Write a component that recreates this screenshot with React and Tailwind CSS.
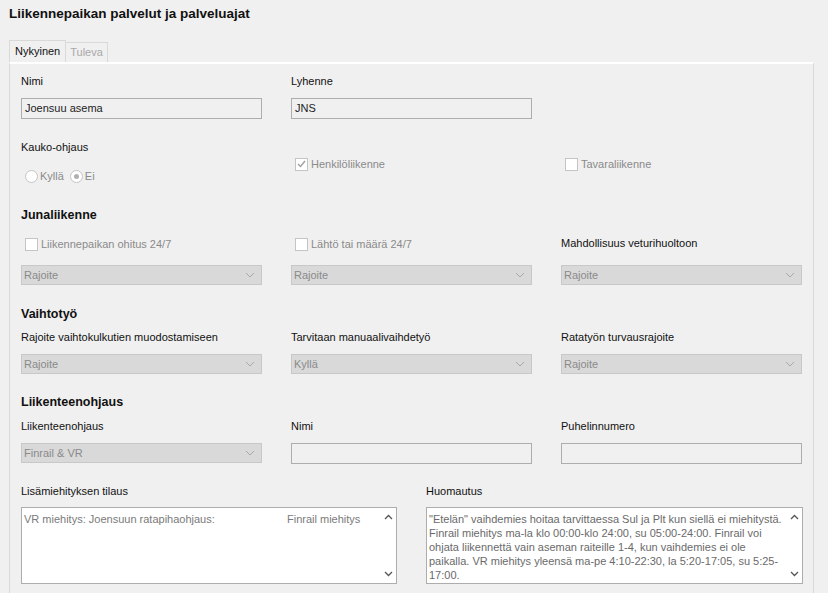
const F = { fontFamily: '"Liberation Sans", Arial, sans-serif' };

function Field({ value }) {
  return (
    <div className="h-[21px] border border-[#adadad] bg-[#f0f0f0] px-[3px] flex items-center text-[11px] text-[#222]">
      {value}
    </div>
  );
}

function Select({ value }) {
  return (
    <div className="h-[20px] border border-[#c8c8c8] bg-[#d9d9d9] pl-[2px] pr-[6px] flex items-center justify-between text-[11px] text-[#8a8a8a]">
      <span>{value}</span>
      <svg width="10" height="6" viewBox="0 0 10 6"><path d="M1 1l4 4 4-4" fill="none" stroke="#a8a8a8" strokeWidth="1" /></svg>
    </div>
  );
}

function Check({ label, checked }) {
  return (
    <div className="flex items-center gap-[3px] text-[11px] text-[#8a8a8a]">
      <div className="w-[13px] h-[13px] border border-[#c4c4c4] bg-white flex items-center justify-center">
        {checked && <svg width="9" height="8" viewBox="0 0 9 8"><path d="M1 4l2.5 2.5L8 1" fill="none" stroke="#a0a0a0" strokeWidth="1.4" /></svg>}
      </div>
      {label}
    </div>
  );
}

function Label({ children }) {
  return <div className="text-[11px] text-[#111] h-[24px] leading-[14px]">{children}</div>;
}

function Heading({ children, className }) {
  return <div className={`text-[12.5px] font-bold text-[#111] h-[16px] leading-[16px] ${className}`}>{children}</div>;
}

function ScrollArrows() {
  return (
    <div className="flex flex-col justify-between items-center w-[16px] py-[6px]">
      <svg width="9" height="6" viewBox="0 0 9 6"><path d="M1 5l3.5-3.5L8 5" fill="none" stroke="#555" strokeWidth="1.3" /></svg>
      <svg width="9" height="6" viewBox="0 0 9 6"><path d="M1 1l3.5 3.5L8 1" fill="none" stroke="#555" strokeWidth="1.3" /></svg>
    </div>
  );
}

const row = 'grid grid-cols-[241px_241px_241px] gap-x-[29px]';

export default function App() {
  return (
    <div style={F} className="w-[828px] h-[593px] bg-[#f0f0f0] overflow-hidden">
      <div className="px-[9px] pt-[4px] h-[40px] text-[13.5px] font-bold text-[#111]">Liikennepaikan palvelut ja palveluajat</div>
      <div className="pl-[9px] flex items-end h-[22px]">
        <div className="h-[22px] px-[5px] border border-b-0 border-[#d9d9d9] bg-[#f0f0f0] text-[11px] text-[#111] flex items-center">Nykyinen</div>
        <div className="h-[20px] px-[4px] border border-l-0 border-b-0 border-[#d9d9d9] bg-[#f0f0f0] text-[11px] text-[#a8a8a8] flex items-center">Tuleva</div>
      </div>
      <div className="ml-[9px] w-[805px] h-[540px] border-l border-r border-[#d9d9d9] border-t-2 border-t-white px-[11px] pt-[10px]">
        <div className={row}>
          <div><Label>Nimi</Label><Field value="Joensuu asema" /></div>
          <div><Label>Lyhenne</Label><Field value="JNS" /></div>
          <div />
        </div>
        <div className={`${row} mt-[21px] h-[42px]`}>
          <div>
            <div className="text-[11px] text-[#111] h-[28px] leading-[14px]">Kauko-ohjaus</div>
            <div className="flex items-center gap-[6px] pl-[4px] text-[11px] text-[#8a8a8a]">
              <div className="flex items-center gap-[2px]"><div className="w-[13px] h-[13px] rounded-full border border-[#c4c4c4] bg-white" />Kyllä</div>
              <div className="flex items-center gap-[2px]"><div className="w-[13px] h-[13px] rounded-full border border-[#c4c4c4] bg-white flex items-center justify-center"><div className="w-[5px] h-[5px] rounded-full bg-[#b0b0b0]" /></div>Ei</div>
            </div>
          </div>
          <div className="pt-[16px] pl-[4px]"><Check label="Henkilöliikenne" checked /></div>
          <div className="pt-[16px] pl-[4px]"><Check label="Tavaraliikenne" /></div>
        </div>
        <Heading className="mt-[25px]">Junaliikenne</Heading>
        <div className={`${row} mt-[13px]`}>
          <div><div className="h-[29px] pl-[4px]"><Check label="Liikennepaikan ohitus 24/7" /></div><Select value="Rajoite" /></div>
          <div><div className="h-[29px] pl-[4px]"><Check label="Lähtö tai määrä 24/7" /></div><Select value="Rajoite" /></div>
          <div><div className="h-[29px] text-[11px] text-[#111] leading-[14px]">Mahdollisuus veturihuoltoon</div><Select value="Rajoite" /></div>
        </div>
        <Heading className="mt-[21px]">Vaihtotyö</Heading>
        <div className={`${row} mt-[8px]`}>
          <div><Label>Rajoite vaihtokulkutien muodostamiseen</Label><Select value="Rajoite" /></div>
          <div><Label>Tarvitaan manuaalivaihdetyö</Label><Select value="Kyllä" /></div>
          <div><Label>Ratatyön turvausrajoite</Label><Select value="Rajoite" /></div>
        </div>
        <Heading className="mt-[20px]">Liikenteenohjaus</Heading>
        <div className={`${row} mt-[9px]`}>
          <div><Label>Liikenteenohjaus</Label><Select value="Finrail &amp; VR" /></div>
          <div><Label>Nimi</Label><Field value="" /></div>
          <div><Label>Puhelinnumero</Label><Field value="" /></div>
        </div>
        <div className="grid grid-cols-[376px_377px] gap-x-[29px] mt-[20px]">
          <div>
            <div className="text-[11px] text-[#111] h-[23px] leading-[14px]">Lisämiehityksen tilaus</div>
            <div className="h-[77px] border border-[#adadad] bg-white flex text-[11px] text-[#7a7a7a]">
              <div className="flex-1 pl-[2px] pt-[3px] flex"><span className="w-[263px]">VR miehitys: Joensuun ratapihaohjaus:</span><span>Finrail miehitys</span></div>
              <ScrollArrows />
            </div>
          </div>
          <div>
            <div className="text-[11px] text-[#111] h-[23px] leading-[14px]">Huomautus</div>
            <div className="h-[77px] border border-[#adadad] bg-white flex text-[11px] text-[#6a6a6a] leading-[14px]">
              <div className="flex-1 pl-[2px] pt-[4px]">
                "Etelän" vaihdemies hoitaa tarvittaessa Sul ja Plt kun siellä ei miehitystä. Finrail miehitys ma-la klo 00:00-klo 24:00, su 05:00-24:00. Finrail voi ohjata liikennettä vain aseman raiteille 1-4, kun vaihdemies ei ole paikalla. VR miehitys yleensä ma-pe 4:10-22:30, la 5:20-17:05, su 5:25-17:00.
              </div>
              <ScrollArrows />
            </div>
          </div>
        </div>
      </div>
    </div>
  );
}
